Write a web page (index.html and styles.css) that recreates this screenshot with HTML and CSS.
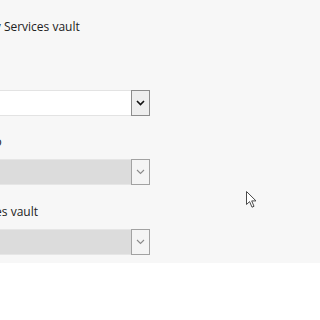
FILE: index.html
```html
<!DOCTYPE html>
<html lang="en">
<head>
    <meta charset="UTF-8">
    <meta name="viewport" content="width=device-width, initial-scale=1.0">
    <title>Backup settings</title>
    <link rel="stylesheet" href="styles.css">
</head>
<body>
    <div class="panel">
        <div class="form">
            <div class="title">Recovery Services vault</div>

            <div class="group">
                <label>Name</label>
                <div class="combo">
                    <span class="combo-value"></span>
                    <span class="combo-button">
                        <svg width="9" height="6" viewBox="0 0 9 6"><path d="M1 1 L4.5 4.5 L8 1" fill="none" stroke="#111" stroke-width="1.6"/></svg>
                    </span>
                </div>
            </div>

            <div class="group">
                <label>Linked to</label>
                <div class="combo disabled">
                    <span class="combo-value"></span>
                    <span class="combo-button">
                        <svg width="9" height="6" viewBox="0 0 9 6"><path d="M1 1 L4.5 4.5 L8 1" fill="none" stroke="#8a8a8a" stroke-width="1.1"/></svg>
                    </span>
                </div>
            </div>

            <div class="group">
                <label>Resources vault</label>
                <div class="combo disabled">
                    <span class="combo-value"></span>
                    <span class="combo-button">
                        <svg width="9" height="6" viewBox="0 0 9 6"><path d="M1 1 L4.5 4.5 L8 1" fill="none" stroke="#8a8a8a" stroke-width="1.1"/></svg>
                    </span>
                </div>
            </div>
        </div>

        <!-- mouse pointer sitting over the panel -->
        <svg class="pointer" width="12" height="18" viewBox="0 0 12 18">
            <path d="M0.5 0.5 L0.5 13.5 L3.6 10.6 L6 16.2 L8 15.3 L5.7 9.9 L10 9.9 Z" fill="#fff" stroke="#4a4a4a" stroke-width="1" stroke-linejoin="miter"/>
        </svg>
    </div>
</body>
</html>
```

FILE: styles.css
```css
body {
    margin: 0;
    font-family: "Open Sans", "Noto Sans", sans-serif;
    font-size: 12px;
    color: #222;
    background-color: #fff;
}

.panel {
    position: relative;
    height: 263px;
    box-sizing: border-box;
    padding-top: 19px;
    background-color: #f7f7f7;
    overflow: hidden;
}

.form {
    margin-left: -50px;
    width: 200px;
}

.title {
    line-height: 16px;
    margin-bottom: 30px;
    white-space: nowrap;
}

.group + .group {
    margin-top: 18px;
}

.group:last-child {
    margin-top: 19px;
}

.group label {
    display: block;
    line-height: 16px;
    margin-bottom: 9px;
    white-space: nowrap;
}

.combo {
    display: flex;
    height: 26px;
    box-sizing: border-box;
    border: 1px solid #e3e3e3;
    background-color: #fff;
}

.combo-value {
    flex: 1;
}

.combo-button {
    display: flex;
    align-items: center;
    justify-content: center;
    width: 17px;
    margin: -1px -1px -1px 0;
    border: 1px solid #8c8c8c;
    background-color: #eeeeee;
}

.combo.disabled {
    background-color: #dcdcdc;
    border-color: #e6e6e6;
}

.combo.disabled .combo-button {
    background-color: #f4f4f4;
    border-color: #a2a2a2;
}

.pointer {
    position: absolute;
    left: 246px;
    top: 191px;
}
```
